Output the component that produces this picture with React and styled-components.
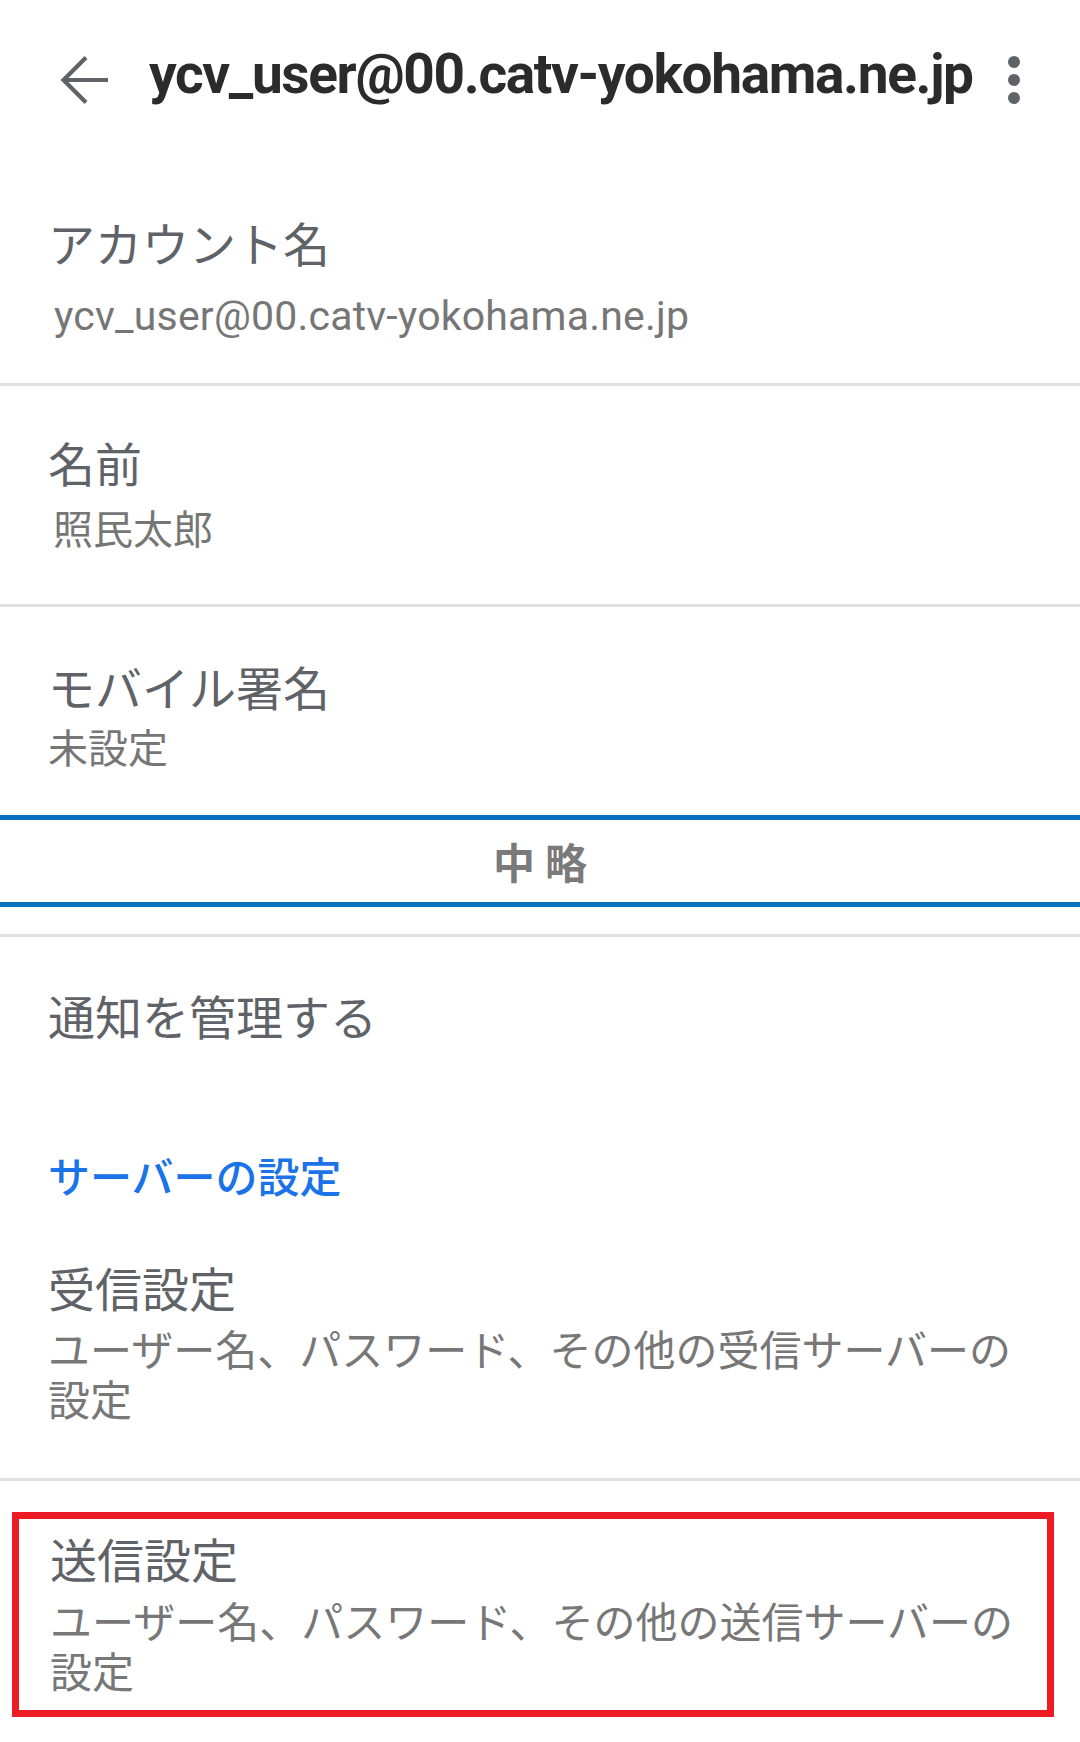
import React from "react";
import styled, { createGlobalStyle } from "styled-components";

const GlobalStyle = createGlobalStyle`
  body {
    margin: 0;
    background: #ffffff;
    font-family: "Noto Sans CJK JP", sans-serif;
  }
`;

const Screen = styled.div`
  width: 1080px;
  min-height: 1742px;
  background: #ffffff;
  overflow: hidden;
`;

const Header = styled.header`
  height: 160px;
  display: flex;
  align-items: center;
  padding: 0 60px;
  box-sizing: border-box;
`;

const BackIcon = styled.svg`
  width: 48px;
  height: 48px;
  flex: none;
  overflow: visible;
`;

const HeaderTitle = styled.h1`
  margin: 0 0 0 41px;
  padding-bottom: 12px;
  font-family: Roboto, sans-serif;
  font-weight: 700;
  font-size: 55px;
  line-height: 64px;
  letter-spacing: -1.35px;
  color: #2b2b2b;
  white-space: nowrap;
  flex: none;
`;

const Kebab = styled.div`
  margin-left: auto;
  display: flex;
  flex-direction: column;
  gap: 6px;
`;

const Dot = styled.span`
  width: 12px;
  height: 12px;
  border-radius: 50%;
  background: #5f6368;
`;

const Row = styled.div`
  padding: ${p => p.$pt}px 48px ${p => p.$pb}px;
  border-bottom: ${p => (p.$divider ? "3px solid #e0e0e0" : "none")};
`;

const ItemTitle = styled.div`
  font-size: 47px;
  line-height: 56px;
  color: #5f6368;
`;

const ItemValue = styled.div`
  margin-top: ${p => p.$gap}px;
  padding-left: ${p => p.$indent || 0}px;
  font-size: 40px;
  line-height: 50px;
  color: #767676;
`;

const EmailValue = styled(ItemValue)`
  font-family: Roboto, sans-serif;
  font-size: 41px;
  letter-spacing: 0.2px;
`;

const Description = styled.div`
  margin-top: ${p => p.$gap}px;
  font-size: 42px;
  line-height: 50px;
  color: #777777;
`;

const OmittedBand = styled.div`
  height: 82px;
  display: flex;
  align-items: center;
  justify-content: center;
  border-top: 5px solid #0b6fc0;
  border-bottom: 5px solid #0b6fc0;
  margin-bottom: 27px;
`;

const OmittedLabel = styled.span`
  padding-left: 10px;
  font-size: 42px;
  line-height: 82px;
  font-weight: 700;
  letter-spacing: 10px;
  color: #7a7a7a;
`;

const Divider = styled.div`
  height: 3px;
  background: #e0e0e0;
`;

const SectionHeading = styled.div`
  padding: 0 48px;
  font-size: 42px;
  line-height: 50px;
  font-weight: 500;
  color: #1a73e8;
`;

const Highlight = styled.div`
  margin: 31px 26px 0 12px;
  border: 7px solid #ed1c24;
  padding: 11px 20px 15px 31px;
`;

const BackArrow = () => (
  <BackIcon viewBox="0 0 48 48" fill="none" stroke="#5f6368" strokeWidth="4.2">
    <polyline points="26,1.5 3.5,24 26,46.5" strokeLinejoin="miter" />
    <line x1="3.5" y1="24" x2="48" y2="24" />
  </BackIcon>
);

const App = () => {
  return (
    <Screen>
      <GlobalStyle />
      <Header>
        <BackArrow />
        <HeaderTitle>ycv_user@00.catv-yokohama.ne.jp</HeaderTitle>
        <Kebab>
          <Dot />
          <Dot />
          <Dot />
        </Kebab>
      </Header>

      <Row $pt={54} $pb={42} $divider>
        <ItemTitle>アカウント名</ItemTitle>
        <EmailValue $gap={21} $indent={6}>ycv_user@00.catv-yokohama.ne.jp</EmailValue>
      </Row>

      <Row $pt={48} $pb={52} $divider>
        <ItemTitle>名前</ItemTitle>
        <ItemValue $gap={12} $indent={5}>照民太郎</ItemValue>
      </Row>

      <Row $pt={51} $pb={44}>
        <ItemTitle>モバイル署名</ItemTitle>
        <ItemValue $gap={7}>未設定</ItemValue>
      </Row>

      <OmittedBand>
        <OmittedLabel>中略</OmittedLabel>
      </OmittedBand>
      <Divider />

      <Row $pt={50} $pb={107}>
        <ItemTitle>通知を管理する</ItemTitle>
      </Row>

      <SectionHeading>サーバーの設定</SectionHeading>

      <Row $pt={59} $pb={55} $divider>
        <ItemTitle>受信設定</ItemTitle>
        <Description $gap={8}>ユーザー名、パスワード、その他の受信サーバーの設定</Description>
      </Row>

      <Highlight>
        <ItemTitle>送信設定</ItemTitle>
        <Description $gap={9}>ユーザー名、パスワード、その他の送信サーバーの設定</Description>
      </Highlight>
    </Screen>
  );
};

export default App;
